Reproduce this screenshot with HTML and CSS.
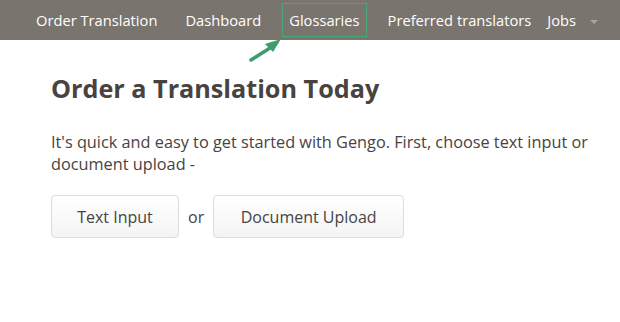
FILE: index.html
```html
<!DOCTYPE html>
<html lang="en">
<head>
  <meta charset="UTF-8" />
  <title>Order a Translation</title>
  <link rel="stylesheet" href="styles.css">
</head>
<body>
  <nav class="topbar">
    <a class="nav-link" href="#">Order Translation</a>
    <a class="nav-link" href="#">Dashboard</a>
    <a class="nav-link highlighted" href="#">Glossaries</a>
    <a class="nav-link" href="#">Preferred translators</a>
    <a class="nav-link jobs" href="#">Jobs <span class="caret"></span></a>
  </nav>

  <svg class="pointer" width="40" height="30" viewBox="0 0 40 30">
    <line x1="4" y1="25" x2="23" y2="13" stroke="#3f9d6d" stroke-width="3.5" stroke-linecap="round"/>
    <polygon points="34,4 18,9 26,17" fill="#3f9d6d"/>
  </svg>

  <main class="content">
    <h1>Order a Translation Today</h1>
    <p>It's quick and easy to get started with Gengo. First, choose text input or document upload -</p>
    <div class="choices">
      <button class="btn btn-text">Text Input</button>
      <span class="or">or</span>
      <button class="btn btn-doc">Document Upload</button>
    </div>
  </main>
</body>
</html>
```

FILE: styles.css
```css
body {
  margin: 0;
  background: #fff;
  font-family: "Open Sans", "Liberation Sans", sans-serif;
  color: #48433f;
  position: relative;
}

.topbar {
  height: 40px;
  background: #79746e;
  display: flex;
  align-items: center;
  padding-left: 29px;
  gap: 14px;
}

.nav-link {
  color: #fff;
  text-decoration: none;
  font-size: 14.7px;
  padding: 0 6px;
  height: 32px;
  line-height: 32px;
  border: 1px solid transparent;
}

.nav-link.highlighted {
  border: 1.5px solid #4aa877;
}

.nav-link.jobs {
  margin-left: -12px;
}

.caret {
  display: inline-block;
  width: 0;
  height: 0;
  margin-left: 10px;
  vertical-align: middle;
  border-left: 4px solid transparent;
  border-right: 4px solid transparent;
  border-top: 4px solid #a9a49f;
}

.pointer {
  position: absolute;
  left: 247px;
  top: 35px;
}

.content {
  padding: 0 20px 0 51px;
}

h1 {
  font-size: 25.2px;
  font-weight: 700;
  margin: 31px 0 0;
  line-height: 34px;
  color: #48433f;
}

p {
  font-size: 16.3px;
  line-height: 22px;
  margin: 26px 0 0;
}

.choices {
  display: flex;
  align-items: center;
  margin-top: 20px;
}

.btn {
  font-family: inherit;
  font-size: 16px;
  color: #48433f;
  height: 43px;
  background: linear-gradient(#ffffff, #f4f4f4);
  border: 1px solid #dcdcdc;
  border-radius: 4px;
}

.btn-text {
  width: 128px;
}

.btn-doc {
  width: 191px;
}

.or {
  font-size: 16px;
  margin: 0 9px;
}
```
